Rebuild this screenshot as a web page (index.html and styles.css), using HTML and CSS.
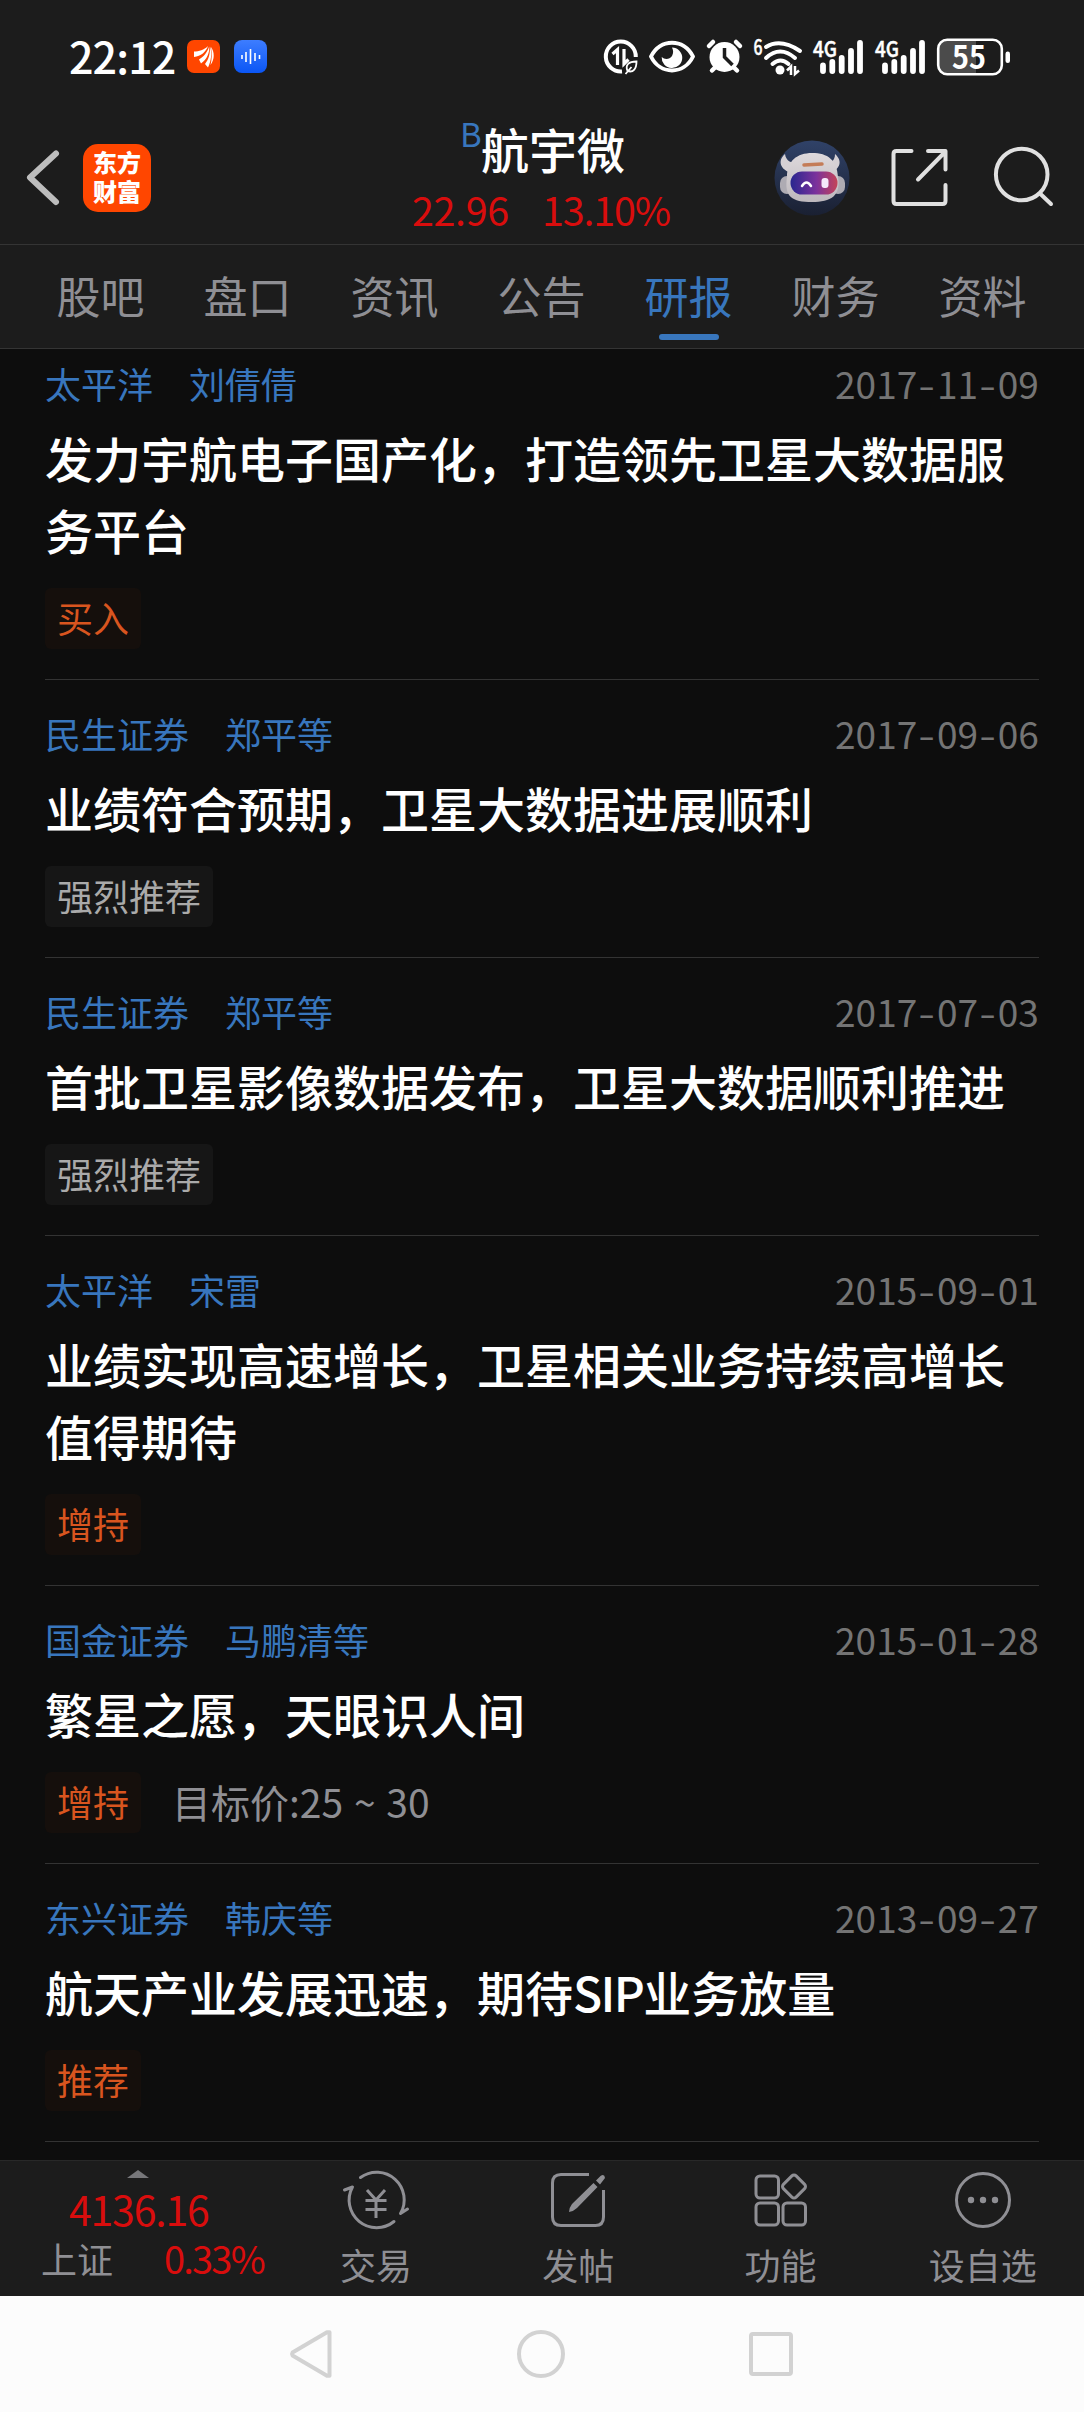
FILE: index.html
```html
<!DOCTYPE html>
<html lang="zh-CN">
<head>
<meta charset="utf-8">
<title>航宇微 - 研报</title>
<link rel="stylesheet" href="styles.css">
</head>
<body>
<div class="screen">
  <div class="status">
    <span class="clock">22:12</span>
    <svg class="app-mark" width="33" height="33" viewBox="0 0 33 33">
      <rect width="33" height="33" rx="7" fill="#ff4600"/>
      <g fill="#fff"><path d="M7 11.500c5 0 10-1.500 14-5.500-2 6-7 10-14 11z"/><path d="M12 19.500c5-3 8-7 10.200-13 .5 6-2.200 13-8.200 17z"/><path d="M18 24c4-5 5-10 5-17.500 2 6 1.500 14-2 21z"/><path d="M24 7c3.500 5 4 12-.5 18 1.500-6 1.500-11 .5-18z"/></g>
    </svg>
    <svg class="app-mark second" width="33" height="33" viewBox="0 0 33 33">
      <defs><linearGradient id="blue" x2="0" y2="1"><stop stop-color="#3d7dff"/><stop offset="1" stop-color="#0b56f5"/></linearGradient></defs>
      <rect width="33" height="33" rx="8" fill="url(#blue)"/>
      <path d="M8 15v4M12 12v10M16.500 9v15M21 13v8M25.500 15v4" stroke="#fff" stroke-width="1.600"/>
    </svg>
    <div class="indicators">
      <svg width="35" height="36" viewBox="604 39 35 36" fill="none" stroke="#fff" stroke-width="4">
        <path d="M623 71.500A15 15 0 1 1 636.800 57"/>
        <path d="M613.500 54l5-4.500v15.500M625 49v15l4.500-4.500" stroke-width="3.200"/>
        <path d="M628.500 71c-2.500-6 1-9.500 9-9.500 0 7-3 11.500-9 9.500zM626.500 74l6-7" stroke-width="1.800"/>
      </svg>
      <svg width="46" height="34" viewBox="651 40 46 34">
        <path d="M653 56.500C662 38 686 38 695 56.500 686 75 662 75 653 56.500Z" fill="none" stroke="#fff" stroke-width="4" stroke-linejoin="round"/>
        <path d="M674 47.500a10.300 10.300 0 1 1-10.300 9.500c3 3 8 2.500 10.300-1 1.500-3 1.500-5.500 0-8.500z" fill="#fff"/>
      </svg>
      <svg width="37" height="36" viewBox="708.500 39 37 36" stroke-linecap="round">
        <circle cx="727" cy="57" r="15" fill="#fff"/>
        <path d="M711.500 46l4-4M742.500 46l-4-4M714.500 70.500l4-4M739.500 70.500l-4-4" stroke="#fff" stroke-width="4.500"/>
        <path d="M727 48v9l8 8" stroke="#1c1c1c" stroke-width="3.500" fill="none" stroke-linecap="butt"/>
      </svg>
      <svg width="50" height="38" viewBox="755 36 50 38" fill="none" stroke="#fff" stroke-width="4">
        <text class="tiny" x="754.500" y="53" textLength="9" lengthAdjust="spacingAndGlyphs">6</text>
        <path d="M767 45q14.500-9 34 4M767 56q14-13 29 0M773.500 62q8-7 16 0" stroke-linecap="round"/>
        <circle cx="781" cy="68" r="4.500" fill="#fff" stroke="none"/>
        <path d="M788 68.500l4-4v8.500M796 64v8l4-3.500" stroke-width="2.500"/>
      </svg>
      <svg class="signal" width="51" height="36" viewBox="813 38 51 36">
        <text class="tiny" x="813" y="56" textLength="24" lengthAdjust="spacingAndGlyphs">4G</text>
        <path d="M823 64.500v5.500M832.300 61v9M841.700 57v13M851 50v20M860 42v28" stroke="#fff" stroke-width="5.800" stroke-linecap="round"/>
      </svg>
      <svg class="signal" width="51" height="36" viewBox="813 38 51 36">
        <text class="tiny" x="813" y="56" textLength="24" lengthAdjust="spacingAndGlyphs">4G</text>
        <path d="M823 64.500v5.500M832.300 61v9M841.700 57v13M851 50v20M860 42v28" stroke="#fff" stroke-width="5.800" stroke-linecap="round"/>
      </svg>
      <svg class="battery" width="74" height="38" viewBox="937 36.500 74 38">
        <path d="M976 38h-29q-9 0-9 9v17q0 9 9 9h29z" fill="#4b4b4b"/>
        <rect x="938.200" y="38.200" width="63.600" height="34.600" rx="9" fill="none" stroke="#fff" stroke-width="2.600"/>
        <rect x="1005.500" y="50" width="4.500" height="11.500" rx="2.200" fill="#fff"/>
        <text class="charge" x="952" y="67" textLength="34" lengthAdjust="spacingAndGlyphs">55</text>
      </svg>
    </div>
  </div>

  <header class="header">
    <svg class="back" width="34" height="58" viewBox="26 148 34 58"><path d="M56 153.500L30 177.500l26 24.500" fill="none" stroke="#bdbdbd" stroke-width="6" stroke-linecap="round" stroke-linejoin="round"/></svg>
    <div class="logo">东方<br>财富</div>
    <div class="stock">
      <div class="name"><sup>B</sup>航宇微</div>
      <div class="quote"><span>22.96</span><span class="pct">13.10%</span></div>
    </div>
    <svg class="robot" width="76" height="76" viewBox="0 0 76 76">
      <defs>
        <linearGradient id="disc" x2="0" y2="1"><stop stop-color="#304268"/><stop offset="1" stop-color="#1a2032"/></linearGradient>
        <linearGradient id="shell" x2="0" y2="1"><stop stop-color="#ded9dc"/><stop offset="1" stop-color="#bdb8bd"/></linearGradient>
        <linearGradient id="visor"><stop stop-color="#29278f"/><stop offset=".55" stop-color="#7b329c"/><stop offset="1" stop-color="#c44358"/></linearGradient>
      </defs>
      <circle cx="38" cy="38" r="37.500" fill="url(#disc)"/>
      <path d="M11 14c-8 7-4 15 4 18l8-9c-6 0-11-2-12-9zM61 14c8 7 5 15-4 18l-7-9c7 0 11-2 11-9z" fill="#d5d0d4"/>
      <rect x="6" y="36" width="14" height="18" rx="7" fill="#aeabb3"/><rect x="57" y="36" width="14" height="18" rx="7" fill="#aeabb3"/>
      <path d="M13 37c0-16 10-24 25-24 16 0 25 7 26 24 3 19-7 25-26 25-20 0-28-5-25-25z" fill="url(#shell)"/>
      <path d="M30 25l18-1" stroke="#c47c58" stroke-width="3.500" stroke-linecap="round"/>
      <rect x="16.500" y="31.500" width="47" height="23" rx="11.500" fill="url(#visor)"/>
      <path d="M28 46q4.500-7 9 0" fill="none" stroke="#fff" stroke-width="2.500" stroke-linecap="round"/>
      <rect x="47.500" y="38" width="7" height="10" rx="3" fill="#f4e8fa"/>
    </svg>
    <svg class="share" width="60" height="60" viewBox="891 148 60 60" fill="none" stroke="#e0e0e0" stroke-width="4" stroke-linecap="round" stroke-linejoin="round"><path d="M912.500 151h-15q-3 0-3 3v47q0 3 3 3h46q3 0 3-3v-16M929 151h17.500v18.500M946 152l-27 27.500"/></svg>
    <svg class="search" width="62" height="62" viewBox="994 146 62 62" fill="none" stroke="#e0e0e0" stroke-width="4" stroke-linecap="round"><circle cx="1022.700" cy="174.500" r="25.800"/><path d="M1041.500 194l10.500 10"/></svg>
  </header>

  <nav class="tabs">
    <span>股吧</span><span>盘口</span><span>资讯</span><span>公告</span><span class="active">研报</span><span>财务</span><span>资料</span>
  </nav>

  <main class="list">
    <article class="card scrolled">
      <div class="meta"><span>太平洋</span><span>刘倩倩</span><time>2017<i>-</i>11<i>-</i>09</time></div>
      <h2>发力宇航电子国产化，打造领先卫星大数据服务平台</h2>
      <div class="foot"><span class="tag">买入</span></div>
    </article>
    <article class="card">
      <div class="meta"><span>民生证券</span><span>郑平等</span><time>2017<i>-</i>09<i>-</i>06</time></div>
      <h2>业绩符合预期，卫星大数据进展顺利</h2>
      <div class="foot"><span class="tag plain">强烈推荐</span></div>
    </article>
    <article class="card">
      <div class="meta"><span>民生证券</span><span>郑平等</span><time>2017<i>-</i>07<i>-</i>03</time></div>
      <h2>首批卫星影像数据发布，卫星大数据顺利推进</h2>
      <div class="foot"><span class="tag plain">强烈推荐</span></div>
    </article>
    <article class="card">
      <div class="meta"><span>太平洋</span><span>宋雷</span><time>2015<i>-</i>09<i>-</i>01</time></div>
      <h2>业绩实现高速增长，卫星相关业务持续高增长值得期待</h2>
      <div class="foot"><span class="tag">增持</span></div>
    </article>
    <article class="card">
      <div class="meta"><span>国金证券</span><span>马鹏清等</span><time>2015<i>-</i>01<i>-</i>28</time></div>
      <h2>繁星之愿，天眼识人间</h2>
      <div class="foot"><span class="tag">增持</span><span class="target">目标价:25 ~ 30</span></div>
    </article>
    <article class="card">
      <div class="meta"><span>东兴证券</span><span>韩庆等</span><time>2013<i>-</i>09<i>-</i>27</time></div>
      <h2>航天产业发展迅速，期待<span class="latin">SIP</span>业务放量</h2>
      <div class="foot"><span class="tag">推荐</span></div>
    </article>
  </main>

  <footer class="toolbar">
    <div class="index">
      <svg class="caret" width="22" height="8" viewBox="0 0 22 8"><path d="M0 8L11 0l11 8z" fill="#77777a"/></svg>
      <div class="points">4136.16</div>
      <div class="change"><span>上证</span><b>0.33%</b></div>
    </div>
    <div class="action">
      <svg width="66" height="62" viewBox="343.500 2170 66 62" fill="none" stroke="#8f8f94" stroke-width="3" stroke-linecap="round" stroke-linejoin="round">
        <path d="M361 2177.500A27.500 27.500 0 0 1 401 2213.500l7-4.500M394.500 2221.500A27.500 27.500 0 0 1 353 2187l-8 3"/>
        <path d="M367.500 2190l9 10 9-10M366 2200.500h21M366 2209.500h21M376.500 2201v17" stroke-linecap="butt"/>
      </svg>
      <span>交易</span>
    </div>
    <div class="action">
      <svg width="62" height="62" viewBox="548 2170 62 62" fill="none" stroke="#8f8f94" stroke-width="3">
        <path d="M590 2174.500h-28q-8.500 0-8.500 8.500v34q0 8.500 8.500 8.500h34.500q8 0 8-8.500v-27"/>
        <path d="M594.500 2183l4 4-20.500 21q-3 3-8 4 .5-5 3-8zM597 2180.500l4.500-4.500q4-2.500 4.500 2l-5 6.500z" fill="#8f8f94" stroke="none"/>
      </svg>
      <span>发帖</span>
    </div>
    <div class="action">
      <svg width="62" height="62" viewBox="750.500 2170 62 62" fill="none" stroke="#8f8f94" stroke-width="3">
        <rect x="756.500" y="2176" width="22.500" height="22" rx="4"/><rect x="756.500" y="2203" width="22.500" height="22" rx="4"/><rect x="783.500" y="2203" width="22.500" height="22" rx="4"/>
        <rect x="785.500" y="2177.500" width="18" height="18" rx="3" transform="rotate(45 794.500 2186.500)"/>
      </svg>
      <span>功能</span>
    </div>
    <div class="action">
      <svg width="62" height="62" viewBox="952 2170 62 62" fill="none" stroke="#8f8f94" stroke-width="3"><circle cx="983" cy="2200" r="26.500"/><g fill="#8f8f94" stroke="none"><circle cx="971" cy="2200" r="3.200"/><circle cx="983" cy="2200" r="3.200"/><circle cx="995" cy="2200" r="3.200"/></g></svg>
      <span>设自选</span>
    </div>
  </footer>

  <div class="system-nav">
    <svg width="50" height="56" viewBox="286 2326 50 56" fill="none" stroke="#d2d2d2" stroke-width="4" stroke-linejoin="round"><path d="M292.500 2352.500Q291.500 2354 292.500 2355.500L327 2375.800h2.500v-43.600H327z"/></svg>
    <svg width="56" height="56" viewBox="514 2326 56 56" fill="none" stroke="#d2d2d2" stroke-width="4"><circle cx="542" cy="2354" r="22"/></svg>
    <svg width="50" height="56" viewBox="746 2326 50 56" fill="none" stroke="#d2d2d2" stroke-width="4"><rect x="751" y="2334" width="40" height="40" rx="2"/></svg>
  </div>
</div>
</body>
</html>
```
FILE: styles.css
```css
* { box-sizing: border-box; }

body {
  margin: 0;
  background: #0d0d0d;
  font-family: "Noto Sans CJK SC", sans-serif;
}

svg { display: block; flex: none; overflow: visible; }

.screen {
  width: 1084px;
  height: 2412px;
  display: flex;
  flex-direction: column;
  overflow: hidden;
}

/* Status bar */
.status {
  height: 113px;
  padding: 0 73px 0 69px;
  display: flex;
  align-items: center;
  background: #1c1c1c;
}

.clock {
  width: 118px;
  padding-bottom: 4px;
  color: #fff;
  font-size: 43px;
  font-weight: 500;
  line-height: 60px;
  letter-spacing: -0.9px;
  white-space: nowrap;
}

.app-mark.second { margin-left: 14px; }

.indicators {
  margin-left: auto;
  display: flex;
  align-items: center;
  gap: 11px;
}

.signal { margin-left: -2px; }
.signal + .signal { margin-left: 0; }
.battery { margin-left: 0; }

.tiny {
  font: 500 22px "Noto Sans CJK SC", sans-serif;
  fill: #fff;
  stroke: #fff;
  stroke-width: 0.5px;
}

.charge {
  font: 700 32px "Noto Sans CJK SC", sans-serif;
  fill: #fff;
}

/* Title bar */
.header {
  height: 132px;
  display: flex;
  align-items: flex-start;
  padding: 0 28px 0 26px;
  background: #1c1c1c;
  border-bottom: 1px solid #343434;
}

.back { margin-top: 35px; }

.logo {
  width: 68px;
  height: 68px;
  margin: 31px 0 0 23px;
  padding-top: 3px;
  border-radius: 15px;
  background: #ff4600;
  color: #fff;
  font-size: 24px;
  font-weight: 900;
  line-height: 29px;
  text-align: center;
}

.stock {
  width: 262px;
  margin-left: 261px;
  text-align: center;
}

.name {
  margin-top: 4px;
  padding-left: 48px;
  color: #fff;
  font-size: 48px;
  font-weight: 500;
  line-height: 62px;
  text-align: left;
  white-space: nowrap;
}

.name sup {
  display: inline-block;
  width: 21px;
  color: #3876bd;
  font-size: 33px;
  font-weight: 400;
  line-height: 30px;
  vertical-align: 22px;
}

.quote {
  display: flex;
  gap: 35px;
  margin-top: 3px;
  color: #d90d0d;
  font-size: 39.500px;
  line-height: 54px;
  letter-spacing: -0.4px;
  white-space: nowrap;
}

.quote span { width: 95px; text-align: left; }
.quote .pct { width: 126px; letter-spacing: -1.2px; }

.robot { margin: 27px 0 0 100px; }
.share { margin: 35px 0 0 40px; }
.search { margin: 33px 0 0 43px; }

/* Tabs */
.tabs {
  height: 104px;
  display: flex;
  padding: 0 28px 0 27px;
  background: #1c1c1c;
  border-bottom: 1px solid #343434;
}

.tabs span {
  flex: 1;
  display: flex;
  flex-direction: column;
  align-items: center;
  padding-top: 20px;
  color: #8f8f94;
  font-size: 44px;
  line-height: 60px;
}

.tabs .active { color: #3876bd; }

.tabs .active::after {
  content: "";
  width: 60px;
  height: 6px;
  margin-top: 9px;
  border-radius: 3px;
  background: #3876bd;
}

/* Research reports */
.list {
  height: 1811px;
  padding: 0 45px;
  overflow: hidden;
  background: #0d0d0d;
}

.card {
  padding: 30px 0;
  border-bottom: 1px solid #333;
}

.card.scrolled { margin-top: -19px; }

.meta {
  display: flex;
  gap: 36px;
  color: #3876bd;
  font-size: 36px;
  line-height: 46px;
}

.meta time {
  margin-left: auto;
  color: #747474;
  font-size: 37px;
  letter-spacing: 0.1px;
}

.meta i {
  display: inline-block;
  width: 19.500px;
  font-style: normal;
  text-align: center;
  transform: scaleX(1.300);
}

.card h2 {
  margin: 15px 0 0;
  color: #fff;
  font-size: 48px;
  font-weight: 500;
  line-height: 72px;
}

.latin { letter-spacing: -1.6px; }

.foot {
  display: flex;
  align-items: center;
  height: 61px;
  margin-top: 23px;
}

.tag {
  height: 61px;
  padding: 0 12px;
  border-radius: 6px;
  background: #150f0c;
  color: #d9551f;
  font-size: 36px;
  line-height: 59px;
}

.tag.plain {
  background: #161616;
  color: #aaa;
}

.target {
  margin-left: 31px;
  padding-bottom: 4px;
  color: #8f8f94;
  font-size: 39px;
  line-height: 56px;
  word-spacing: 2px;
}

/* Bottom toolbar */
.toolbar {
  height: 136px;
  display: flex;
  background: #1c1c1c;
  border-top: 1px solid #282828;
}

.index { width: 275px; }
.caret { margin: 9px 0 0 127px; }

.points {
  margin: 0 0 0 69px;
  color: #d90d0d;
  font-size: 41px;
  line-height: 60px;
  letter-spacing: -1.2px;
}

.change {
  display: flex;
  margin: -3px 0 0 41px;
  color: #8f8f94;
  font-size: 36px;
  line-height: 46px;
}

.change b {
  margin-left: 51px;
  color: #d90d0d;
  font-size: 38px;
  font-weight: 400;
  letter-spacing: -1.8px;
}

.action {
  flex: 1;
  display: flex;
  flex-direction: column;
  align-items: center;
  padding-top: 9px;
  color: #8f8f94;
  font-size: 36px;
  line-height: 46px;
}

.action span { margin-top: 9px; }

/* System navigation */
.system-nav {
  height: 116px;
  display: flex;
  align-items: center;
  justify-content: space-between;
  padding: 0 288px 0 286px;
  background: #fcfcfc;
}
```
